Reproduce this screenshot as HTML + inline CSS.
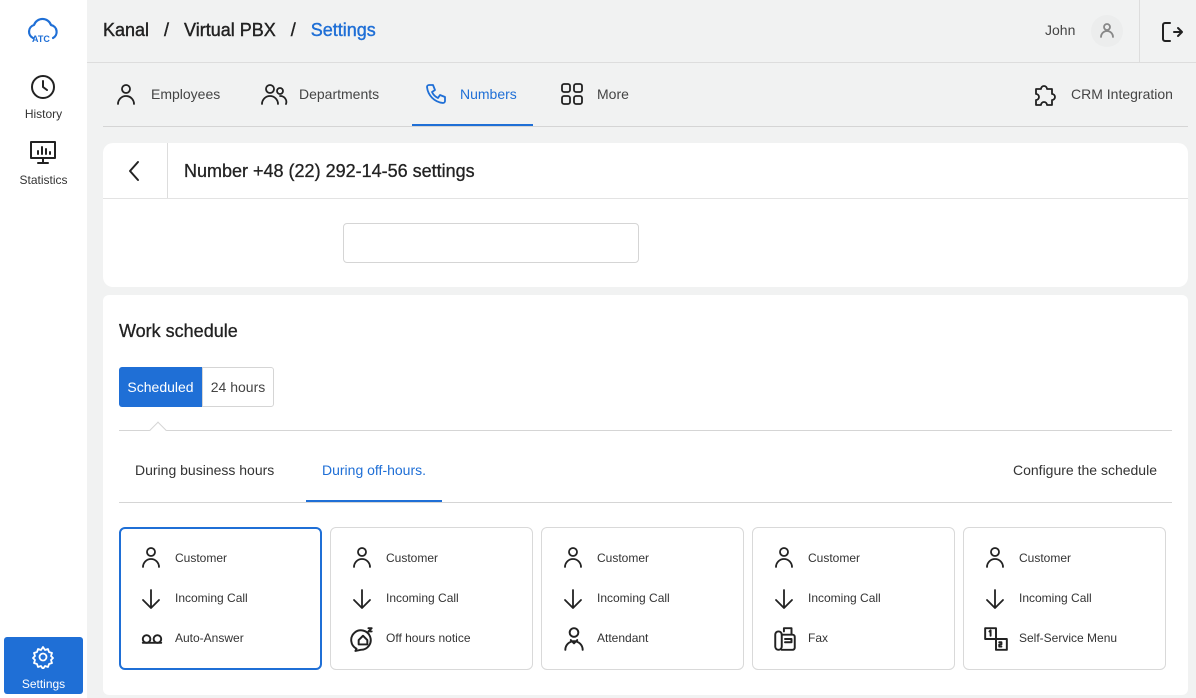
<!DOCTYPE html><html><head><style>
*{box-sizing:border-box;margin:0;padding:0}
body{width:1196px;height:698px;background:#f1f2f2;font-family:"Liberation Sans",sans-serif;color:#333;position:relative;overflow:hidden}
.a{position:absolute}
svg{fill:none;stroke:#222;stroke-width:1.8;stroke-linecap:round;stroke-linejoin:round}
.side{left:0;top:0;width:87px;height:698px;background:#fff}
.si{width:87px;text-align:center;font-size:12px;color:#333}
.tab{font-size:14px;color:#444;top:86px}
.card{background:#fff;border:1px solid #d9d9d9;border-radius:6px;width:203px;height:143px;top:527px}
</style></head><body>
<div class="a side"></div>
<svg class="a" style="left:25px;top:14px" width="36" height="30" viewBox="0 0 36 30"><path stroke="#1f6fd6" stroke-width="2.2" d="M8 24a7 7 0 0 1 1-13a9 9 0 0 1 17 0a7 7 0 0 1 2 13"/></svg>
<div class="a" style="left:32px;top:34px;font-size:9px;font-weight:bold;color:#1f6fd6">ATC</div>
<svg class="a" style="left:30px;top:74px" width="26" height="26" viewBox="0 0 26 26"><circle cx="13" cy="13" r="11" stroke-width="2"/><path d="M13 7v6l4 3" stroke-width="2"/></svg>
<div class="a si" style="top:107px">History</div>
<svg class="a" style="left:29px;top:140px" width="28" height="26" viewBox="0 0 28 26"><rect x="2" y="2" width="24" height="16" stroke-width="2"/><path d="M14 18v5M9 23h10M9 14v-3M13 14V7M17 14v-5M21 14v-2" stroke-width="2"/></svg>
<div class="a si" style="top:173px">Statistics</div>
<div class="a" style="left:4px;top:637px;width:79px;height:57px;background:#1f6fd6;border-radius:3px"></div>
<svg class="a" style="left:31px;top:645px;stroke:#fff" width="24" height="24" viewBox="0 0 24 24"><circle cx="12" cy="12" r="3.5"/><path d="M12 2l2 3 3-1 1 3 3 1-1 3 2 2-2 2 1 3-3 1-1 3-3-1-2 3-2-3-3 1-1-3-3-1 1-3-2-2 2-2-1-3 3-1 1-3 3 1z"/></svg>
<div class="a si" style="left:0;top:677px;color:#fff">Settings</div>

<div class="a" style="left:103px;top:20px;font-size:18px;color:#222;-webkit-text-stroke:0.4px #222">Kanal &nbsp;&nbsp;/&nbsp;&nbsp; Virtual PBX &nbsp;&nbsp;/&nbsp;&nbsp; <span style="color:#1f6fd6;-webkit-text-stroke:0.4px #1f6fd6">Settings</span></div>
<div class="a" style="left:1045px;top:22px;font-size:14px;color:#444">John</div>
<div class="a" style="left:1091px;top:15px;width:32px;height:32px;border-radius:50%;background:#eceded"></div>
<svg class="a" style="left:1099px;top:22px;stroke:#888" width="16" height="16" viewBox="0 0 16 16"><circle cx="8" cy="5" r="3"/><path d="M2 15a6 6 0 0 1 12 0"/></svg>
<div class="a" style="left:1139px;top:0;width:1px;height:62px;background:#ddd"></div>
<svg class="a" style="left:1160px;top:20px" width="24" height="24" viewBox="0 0 24 24"><path d="M10 3H5a2 2 0 0 0-2 2v14a2 2 0 0 0 2 2h5M14 12h8M18 8l4 4-4 4" stroke-width="2"/></svg>
<div class="a" style="left:87px;top:62px;width:1109px;height:1px;background:#ddd"></div>

<svg class="a" style="left:114px;top:82px" width="24" height="24" viewBox="0 0 24 24"><circle cx="12" cy="7" r="4"/><path d="M4 22a8 8 0 0 1 16 0"/></svg>
<div class="a tab" style="left:151px">Employees</div>
<svg class="a" style="left:260px;top:82px" width="28" height="24" viewBox="0 0 28 24"><circle cx="10" cy="7" r="4"/><path d="M2 22a8 8 0 0 1 16 0"/><circle cx="20" cy="9" r="3"/><path d="M20 14a6 6 0 0 1 6 8"/></svg>
<div class="a tab" style="left:299px">Departments</div>
<svg class="a" style="left:424px;top:82px;stroke:#1f6fd6" width="24" height="24" viewBox="0 0 24 24"><path d="M5 3h4l2 5-3 2a12 12 0 0 0 6 6l2-3 5 2v4a2 2 0 0 1-2 2A18 18 0 0 1 3 5a2 2 0 0 1 2-2z"/></svg>
<div class="a tab" style="left:460px;color:#1f6fd6">Numbers</div>
<div class="a" style="left:412px;top:124px;width:121px;height:2px;background:#1f6fd6"></div>
<svg class="a" style="left:560px;top:82px" width="24" height="24" viewBox="0 0 24 24"><rect x="2" y="2" width="8" height="8" rx="2"/><rect x="14" y="2" width="8" height="8" rx="2"/><rect x="2" y="14" width="8" height="8" rx="2"/><rect x="14" y="14" width="8" height="8" rx="2"/></svg>
<div class="a tab" style="left:597px">More</div>
<svg class="a" style="left:1032px;top:80px" width="28" height="28" viewBox="0 0 28 28"><path d="M4 9h5a3 3 0 1 1 6 0h5v5a3 3 0 1 1 0 6v5h-5a3 3 0 1 0-6 0H4v-5a3 3 0 1 0 0-6z"/></svg>
<div class="a tab" style="left:1071px">CRM Integration</div>
<div class="a" style="left:103px;top:126px;width:1085px;height:1px;background:#d5d5d5"></div>

<div class="a" style="left:103px;top:143px;width:1085px;height:144px;background:#fff;border-radius:10px"></div>
<div class="a" style="left:167px;top:143px;width:1px;height:55px;background:#ddd"></div>
<div class="a" style="left:103px;top:198px;width:1085px;height:1px;background:#e3e3e3"></div>
<svg class="a" style="left:126px;top:160px" width="16" height="22" viewBox="0 0 16 22"><path d="M12 2l-8 9 8 9" stroke-width="2"/></svg>
<div class="a" style="left:184px;top:161px;font-size:18px;color:#222;-webkit-text-stroke:0.3px #222">Number +48 (22) 292-14-56 settings</div>
<div class="a" style="left:343px;top:223px;width:296px;height:40px;border:1px solid #d5d5d5;border-radius:4px"></div>

<div class="a" style="left:103px;top:295px;width:1085px;height:400px;background:#fff;border-radius:6px"></div>
<div class="a" style="left:119px;top:321px;font-size:18px;color:#222;-webkit-text-stroke:0.3px #222">Work schedule</div>
<div class="a" style="left:119px;top:367px;width:83px;height:40px;background:#1f6fd6;color:#fff;font-size:14px;text-align:center;line-height:40px;border-radius:3px 0 0 3px">Scheduled</div>
<div class="a" style="left:202px;top:367px;width:72px;height:40px;border:1px solid #d5d5d5;font-size:14px;text-align:center;line-height:38px;color:#444;border-radius:0 3px 3px 0">24 hours</div>
<div class="a" style="left:119px;top:430px;width:1053px;height:1px;background:#d5d5d5"></div>
<div class="a" style="left:152px;top:424px;width:12px;height:12px;background:#fff;border-left:1px solid #d5d5d5;border-top:1px solid #d5d5d5;transform:rotate(45deg)"></div>
<div class="a" style="left:135px;top:462px;font-size:14px;color:#333">During business hours</div>
<div class="a" style="left:322px;top:462px;font-size:14px;color:#1f6fd6">During off-hours.</div>
<div class="a" style="left:306px;top:500px;width:136px;height:2px;background:#1f6fd6"></div>
<div class="a" style="left:1013px;top:462px;font-size:14px;color:#333">Configure the schedule</div>
<div class="a" style="left:119px;top:502px;width:1053px;height:1px;background:#d5d5d5"></div>

<div class="a card" style="left:119px;border:2px solid #1f6fd6"></div>
<div class="a card" style="left:330px"></div>
<div class="a card" style="left:541px"></div>
<div class="a card" style="left:752px"></div>
<div class="a card" style="left:963px"></div>

<div id="rows"></div>
<script>
var xs=[119,330,541,752,963],th=["Auto-Answer","Off hours notice","Attendant","Fax","Self-Service Menu"];
var ic=[
'<circle cx="7" cy="12" r="3.5"/><path d="M3.5 15.5h17"/><circle cx="17" cy="12" r="3.5"/>',
'<path d="M6 21a9 9 0 1 1 4 1l-5 1z"/><path d="M8 13l4-4 4 4v4H8z"/><path d="M17 2h3l-3 3h3"/>',
'<circle cx="12" cy="6" r="4"/><path d="M4 22a8 8 0 0 1 16 0M9 13l3 3 3-3"/>',
'<rect x="3" y="5" width="6" height="17" rx="3"/><path d="M9 8h10a2 2 0 0 1 2 2v10a2 2 0 0 1-2 2H9M11 5V2h7v6M12 12h6v3h-6"/>',
'<rect x="2" y="2" width="10" height="10"/><rect x="12" y="12" width="10" height="10"/><path d="M6 5l1-1v5M15 15h2v2h-2v2h2"/>'];
var h='';
xs.forEach(function(x,i){
h+='<svg class="a" style="left:'+(x+20)+'px;top:545px" width="24" height="24" viewBox="0 0 24 24"><circle cx="12" cy="7" r="4"/><path d="M4 22a8 8 0 0 1 16 0"/></svg>';
h+='<div class="a" style="left:'+(x+56)+'px;top:551px;font-size:12px">Customer</div>';
h+='<svg class="a" style="left:'+(x+20)+'px;top:587px" width="24" height="24" viewBox="0 0 24 24"><path d="M12 3v18M4 13l8 8 8-8"/></svg>';
h+='<div class="a" style="left:'+(x+56)+'px;top:591px;font-size:12px">Incoming Call</div>';
h+='<svg class="a" style="left:'+(x+20)+'px;top:626px" width="26" height="26" viewBox="0 0 24 24">'+ic[i]+'</svg>';
h+='<div class="a" style="left:'+(x+56)+'px;top:631px;font-size:12px">'+th[i]+'</div>';
});
document.getElementById('rows').innerHTML=h;
</script>
</body></html>
